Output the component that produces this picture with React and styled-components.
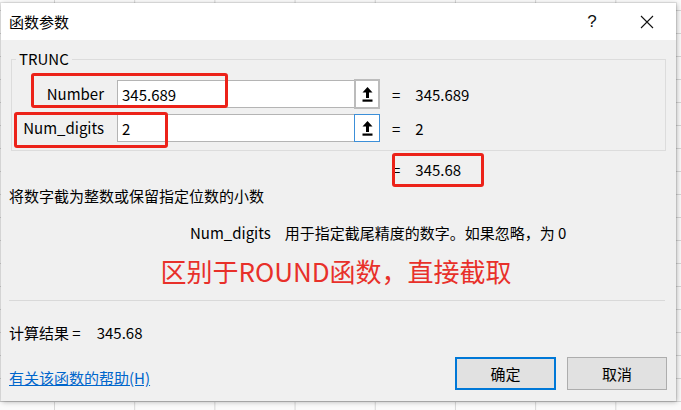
import styled, { createGlobalStyle } from 'styled-components';

const GlobalStyle = createGlobalStyle`
  html, body {
    margin: 0;
    padding: 0;
    width: 681px;
    height: 410px;
    overflow: hidden;
    background-color: #fafafa;
    background-image:
      linear-gradient(to right, #d6d6d6 1px, transparent 1px),
      linear-gradient(to bottom, #d6d6d6 1px, transparent 1px);
    background-size: 80.2px 100%, 100% 23px;
    background-position: 54px 0, 0 10px;
    font-family: "Noto Sans CJK SC", "Noto Sans", sans-serif;
  }
  #root {
    padding: 3px 0 0 1px;
  }
`;

const Dialog = styled.div`
  position: relative;
  width: 675px;
  height: 398px;
  background: #f0f0f0;
  box-shadow: 0 0 0 1px rgba(0, 0, 0, 0.08), 1px 1px 5px rgba(0, 0, 0, 0.28);
  display: flex;
  flex-direction: column;
  color: #000;
  font-size: 15px;
`;

const TitleBar = styled.div`
  height: 37px;
  background: #fff;
  display: flex;
  align-items: center;
  padding: 0 0 0 8px;
`;

const Title = styled.div`
  flex: 1;
  font-size: 15px;
  margin-top: -1px;
`;

const TitleButton = styled.div`
  width: ${p => p.w}px;
  height: 37px;
  display: flex;
  align-items: center;
  justify-content: center;
  font-size: 17px;
  font-family: "Liberation Sans", sans-serif;
  color: #111;
`;

const Body = styled.div`
  flex: 1;
  display: flex;
  flex-direction: column;
  padding: 0 9px 0 8px;
`;

const GroupBox = styled.fieldset`
  margin: 10px 0 0 2px;
  width: 655px;
  box-sizing: border-box;
  border: 1px solid #dcdcdc;
  padding: 11px 0 7px 0;
  display: grid;
  grid-template-columns: 105px 237px 26px 1fr;
  row-gap: 4px;
  align-items: center;
`;

const Legend = styled.legend`
  padding: 0 3px;
  margin-left: 4px;
  font-size: 15px;
  line-height: 18px;
`;

const ArgLabel = styled.div`
  text-align: right;
  padding-right: 13px;
  font-size: 15px;
  line-height: 30px;
`;

const ArgInput = styled.div`
  height: 28px;
  box-sizing: border-box;
  border: 1px solid #b4b4b4;
  border-right: none;
  background: #fff;
  padding-left: 4px;
  display: flex;
  align-items: center;
  font-size: 15px;
`;

const RefButton = styled.div`
  height: ${p => (p.active ? 28 : 30)}px;
  box-sizing: border-box;
  border: ${p => (p.active ? '1px solid #3c8fd8' : '2px solid #bcbcbc')};
  background: #fff;
  display: flex;
  align-items: center;
  justify-content: center;
`;

const ArgValue = styled.div`
  padding-left: 12px;
  font-size: 15px;
  display: flex;
  gap: 15px;
`;

const ResultRow = styled.div`
  height: 30px;
  margin-top: 3px;
  padding-left: 383px;
  display: flex;
  align-items: center;
  gap: 15px;
  font-size: 15px;
`;

const Description = styled.div`
  line-height: 22px;
  margin-top: 1px;
  font-size: 15px;
`;

const ArgDescription = styled.div`
  line-height: 22px;
  margin-top: 15px;
  padding-left: 181px;
  font-size: 15px;
  display: flex;
  gap: 14px;
`;

const Note = styled.div`
  margin-top: 10px;
  text-align: center;
  color: #e8302a;
  font-size: 26px;
  line-height: 34px;
  padding-right: 4px;
`;

const Separator = styled.div`
  margin-top: 12px;
  margin-right: 2px;
  height: 1px;
  background: #d9d9d9;
`;

const Summary = styled.div`
  margin-top: 22px;
  line-height: 20px;
  font-size: 15px;
  display: flex;
  gap: 16px;
`;

const Footer = styled.div`
  margin-top: 14px;
  display: flex;
  align-items: center;
  gap: 11px;
`;

const HelpLink = styled.a`
  flex: 1;
  color: #0066cc;
  text-decoration: underline;
  font-size: 15px;
  margin-top: 8px;
`;

const Button = styled.button`
  width: ${p => (p.primary ? 101 : 100)}px;
  height: 33px;
  box-sizing: border-box;
  background: #e1e1e1;
  border: ${p => (p.primary ? '2px solid #0078d7' : '1px solid #adadad')};
  font-family: inherit;
  font-size: 15px;
  color: #000;
  padding: 0;
`;

const Annotation = styled.div`
  position: absolute;
  left: ${p => p.x}px;
  top: ${p => p.y}px;
  width: ${p => p.w}px;
  height: ${p => p.h}px;
  box-sizing: border-box;
  border: 3px solid #ec2219;
  border-radius: 3px;
  pointer-events: none;
`;

const RefIcon = () => (
  <svg width="11" height="15" viewBox="0 0 11 15">
    <path d="M5.5 0 L10.5 5.5 L7 5.5 L7 11 L4 11 L4 5.5 L0.5 5.5 Z" fill="#000" />
    <rect x="0.5" y="12.5" width="10" height="2.2" fill="#000" />
  </svg>
);

const CloseIcon = () => (
  <svg width="14" height="14" viewBox="0 0 14 14">
    <path d="M1 1 L13 13 M13 1 L1 13" stroke="#111" strokeWidth="1.1" />
  </svg>
);

const args = [
  { name: 'Number', input: '345.689', value: '345.689' },
  { name: 'Num_digits', input: '2', value: '2', active: true },
];

const App = () => (
  <>
    <GlobalStyle />
    <Dialog>
      <TitleBar>
        <Title>函数参数</Title>
        <TitleButton w={40}>?</TitleButton>
        <TitleButton w={6} />
        <TitleButton w={58}><CloseIcon /></TitleButton>
      </TitleBar>
      <Body>
        <GroupBox>
          <Legend>TRUNC</Legend>
          {args.map(arg => (
            <>
              <ArgLabel key={`${arg.name}-l`}>{arg.name}</ArgLabel>
              <ArgInput key={`${arg.name}-i`}>{arg.input}</ArgInput>
              <RefButton key={`${arg.name}-b`} active={arg.active}><RefIcon /></RefButton>
              <ArgValue key={`${arg.name}-v`}><span>=</span><span>{arg.value}</span></ArgValue>
            </>
          ))}
        </GroupBox>
        <ResultRow><span>=</span><span>345.68</span></ResultRow>
        <Description>将数字截为整数或保留指定位数的小数</Description>
        <ArgDescription><span>Num_digits</span><span>用于指定截尾精度的数字。如果忽略，为 0</span></ArgDescription>
        <Note>区别于ROUND函数，直接截取</Note>
        <Separator />
        <Summary><span>计算结果 =</span><span>345.68</span></Summary>
        <Footer>
          <HelpLink>有关该函数的帮助(H)</HelpLink>
          <Button primary>确定</Button>
          <Button>取消</Button>
        </Footer>
      </Body>
      <Annotation x={30} y={70} w={197} h={35} />
      <Annotation x={13} y={109} w={154} h={36} />
      <Annotation x={391} y={150} w={92} h={34} />
    </Dialog>
  </>
);

export default App;
